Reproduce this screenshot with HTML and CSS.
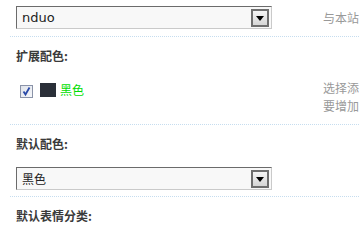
FILE: index.html
```html
<!DOCTYPE html>
<html lang="zh-CN">
<head>
<meta charset="utf-8">
<title>配色设置</title>
<link rel="stylesheet" href="styles.css">
</head>
<body>
<div class="panel">
  <div class="setting first">
    <div class="field-row">
      <div class="field">
        <div class="select">
          <span class="select-value latin">nduo</span>
          <span class="select-btn"><svg width="8" height="5" viewBox="0 0 8 5"><path d="M0 0H8L4 5Z" fill="#000"/></svg></span>
        </div>
      </div>
      <div class="desc">与本站采用的配色方案一致</div>
    </div>
  </div>
  <div class="setting">
    <div class="title">扩展配色:</div>
    <div class="field-row">
      <div class="field">
        <div class="check-line">
          <span class="checkbox"><svg width="11" height="11" viewBox="0 0 11 11"><path d="M2.5 5.5L4.5 8.5L8.5 1.5" fill="none" stroke="#2a4aa8" stroke-width="1.8"/></svg></span>
          <span class="swatch"></span>
          <span class="swatch-label">黑色</span>
        </div>
      </div>
      <div class="desc">选择添加扩展配色，如果需<br>要增加新的配色请到设置</div>
    </div>
  </div>
  <div class="setting">
    <div class="title">默认配色:</div>
    <div class="field-row">
      <div class="field">
        <div class="select">
          <span class="select-value">黑色</span>
          <span class="select-btn"><svg width="8" height="5" viewBox="0 0 8 5"><path d="M0 0H8L4 5Z" fill="#000"/></svg></span>
        </div>
      </div>
      <div class="desc"></div>
    </div>
  </div>
  <div class="setting">
    <div class="title">默认表情分类:</div>
  </div>
</div>
</body>
</html>
```

FILE: styles.css
```css
html, body {
  margin: 0;
  padding: 0;
  background: #fff;
  overflow: hidden;
}
body {
  width: 359px;
  height: 232px;
  font-family: "Noto Sans CJK SC", "DejaVu Sans", sans-serif;
  font-size: 12px;
  color: #333;
}
.panel {
  padding-left: 10px;
}
.setting {
  border-top: 1px dotted #c6ddef;
  padding: 10px 0 6px;
}
.setting.first {
  border-top: none;
  padding: 0 0 7px;
  height: 29px;
}
.setting.first + .setting {
  padding-bottom: 9px;
}
.title {
  padding-left: 6px;
  height: 18px;
  line-height: 18px;
  font-weight: bold;
  color: #3a3a3a;
}
.title + .field-row {
  margin-top: 14px;
}
.field-row {
  display: flex;
  align-items: flex-start;
}
.setting.first .field-row {
  padding-top: 6px;
}
.field {
  flex: none;
  width: 307px;
  padding-left: 6px;
}
.desc {
  flex: none;
  width: 240px;
  white-space: nowrap;
  line-height: 18px;
  color: #999;
}
.setting.first .desc {
  margin-top: 3px;
}
.select {
  box-sizing: border-box;
  width: 256px;
  height: 23px;
  display: flex;
  align-items: center;
  justify-content: space-between;
  background: #f8f8f8;
  border-top: 1px solid #6b6b6b;
  border-left: 1px solid #6b6b6b;
  border-bottom: 1px solid #cacaca;
  border-right: 1px solid #cacaca;
  padding: 0 2px 0 5px;
}
.select-value {
  font-size: 12px;
  color: #222;
  line-height: 18px;
}
.select-value.latin {
  font-family: "DejaVu Sans", sans-serif;
  font-size: 13px;
}
.select-btn {
  box-sizing: border-box;
  width: 18px;
  height: 18px;
  border: 2px solid #6e6e6e;
  background: linear-gradient(#f4f4f4, #d6d6d6);
  display: flex;
  align-items: center;
  justify-content: center;
  padding-top: 2px;
}
.select-btn svg {
  display: block;
}
.check-line {
  display: flex;
  align-items: center;
  height: 14px;
  margin-top: 4px;
}
.checkbox {
  box-sizing: border-box;
  width: 13px;
  height: 13px;
  margin-left: 4px;
  margin-top: 2px;
  border: 1px solid #8a93a8;
  background: linear-gradient(135deg, #dfe3ea, #f6f7fa);
  display: flex;
  align-items: center;
  justify-content: center;
}
.checkbox svg {
  display: block;
}
.swatch {
  width: 16px;
  height: 14px;
  margin-left: 7px;
  background: #2a2f38;
}
.swatch-label {
  margin-left: 4px;
  color: #00dd00;
  font-size: 12px;
  line-height: 14px;
}
```
